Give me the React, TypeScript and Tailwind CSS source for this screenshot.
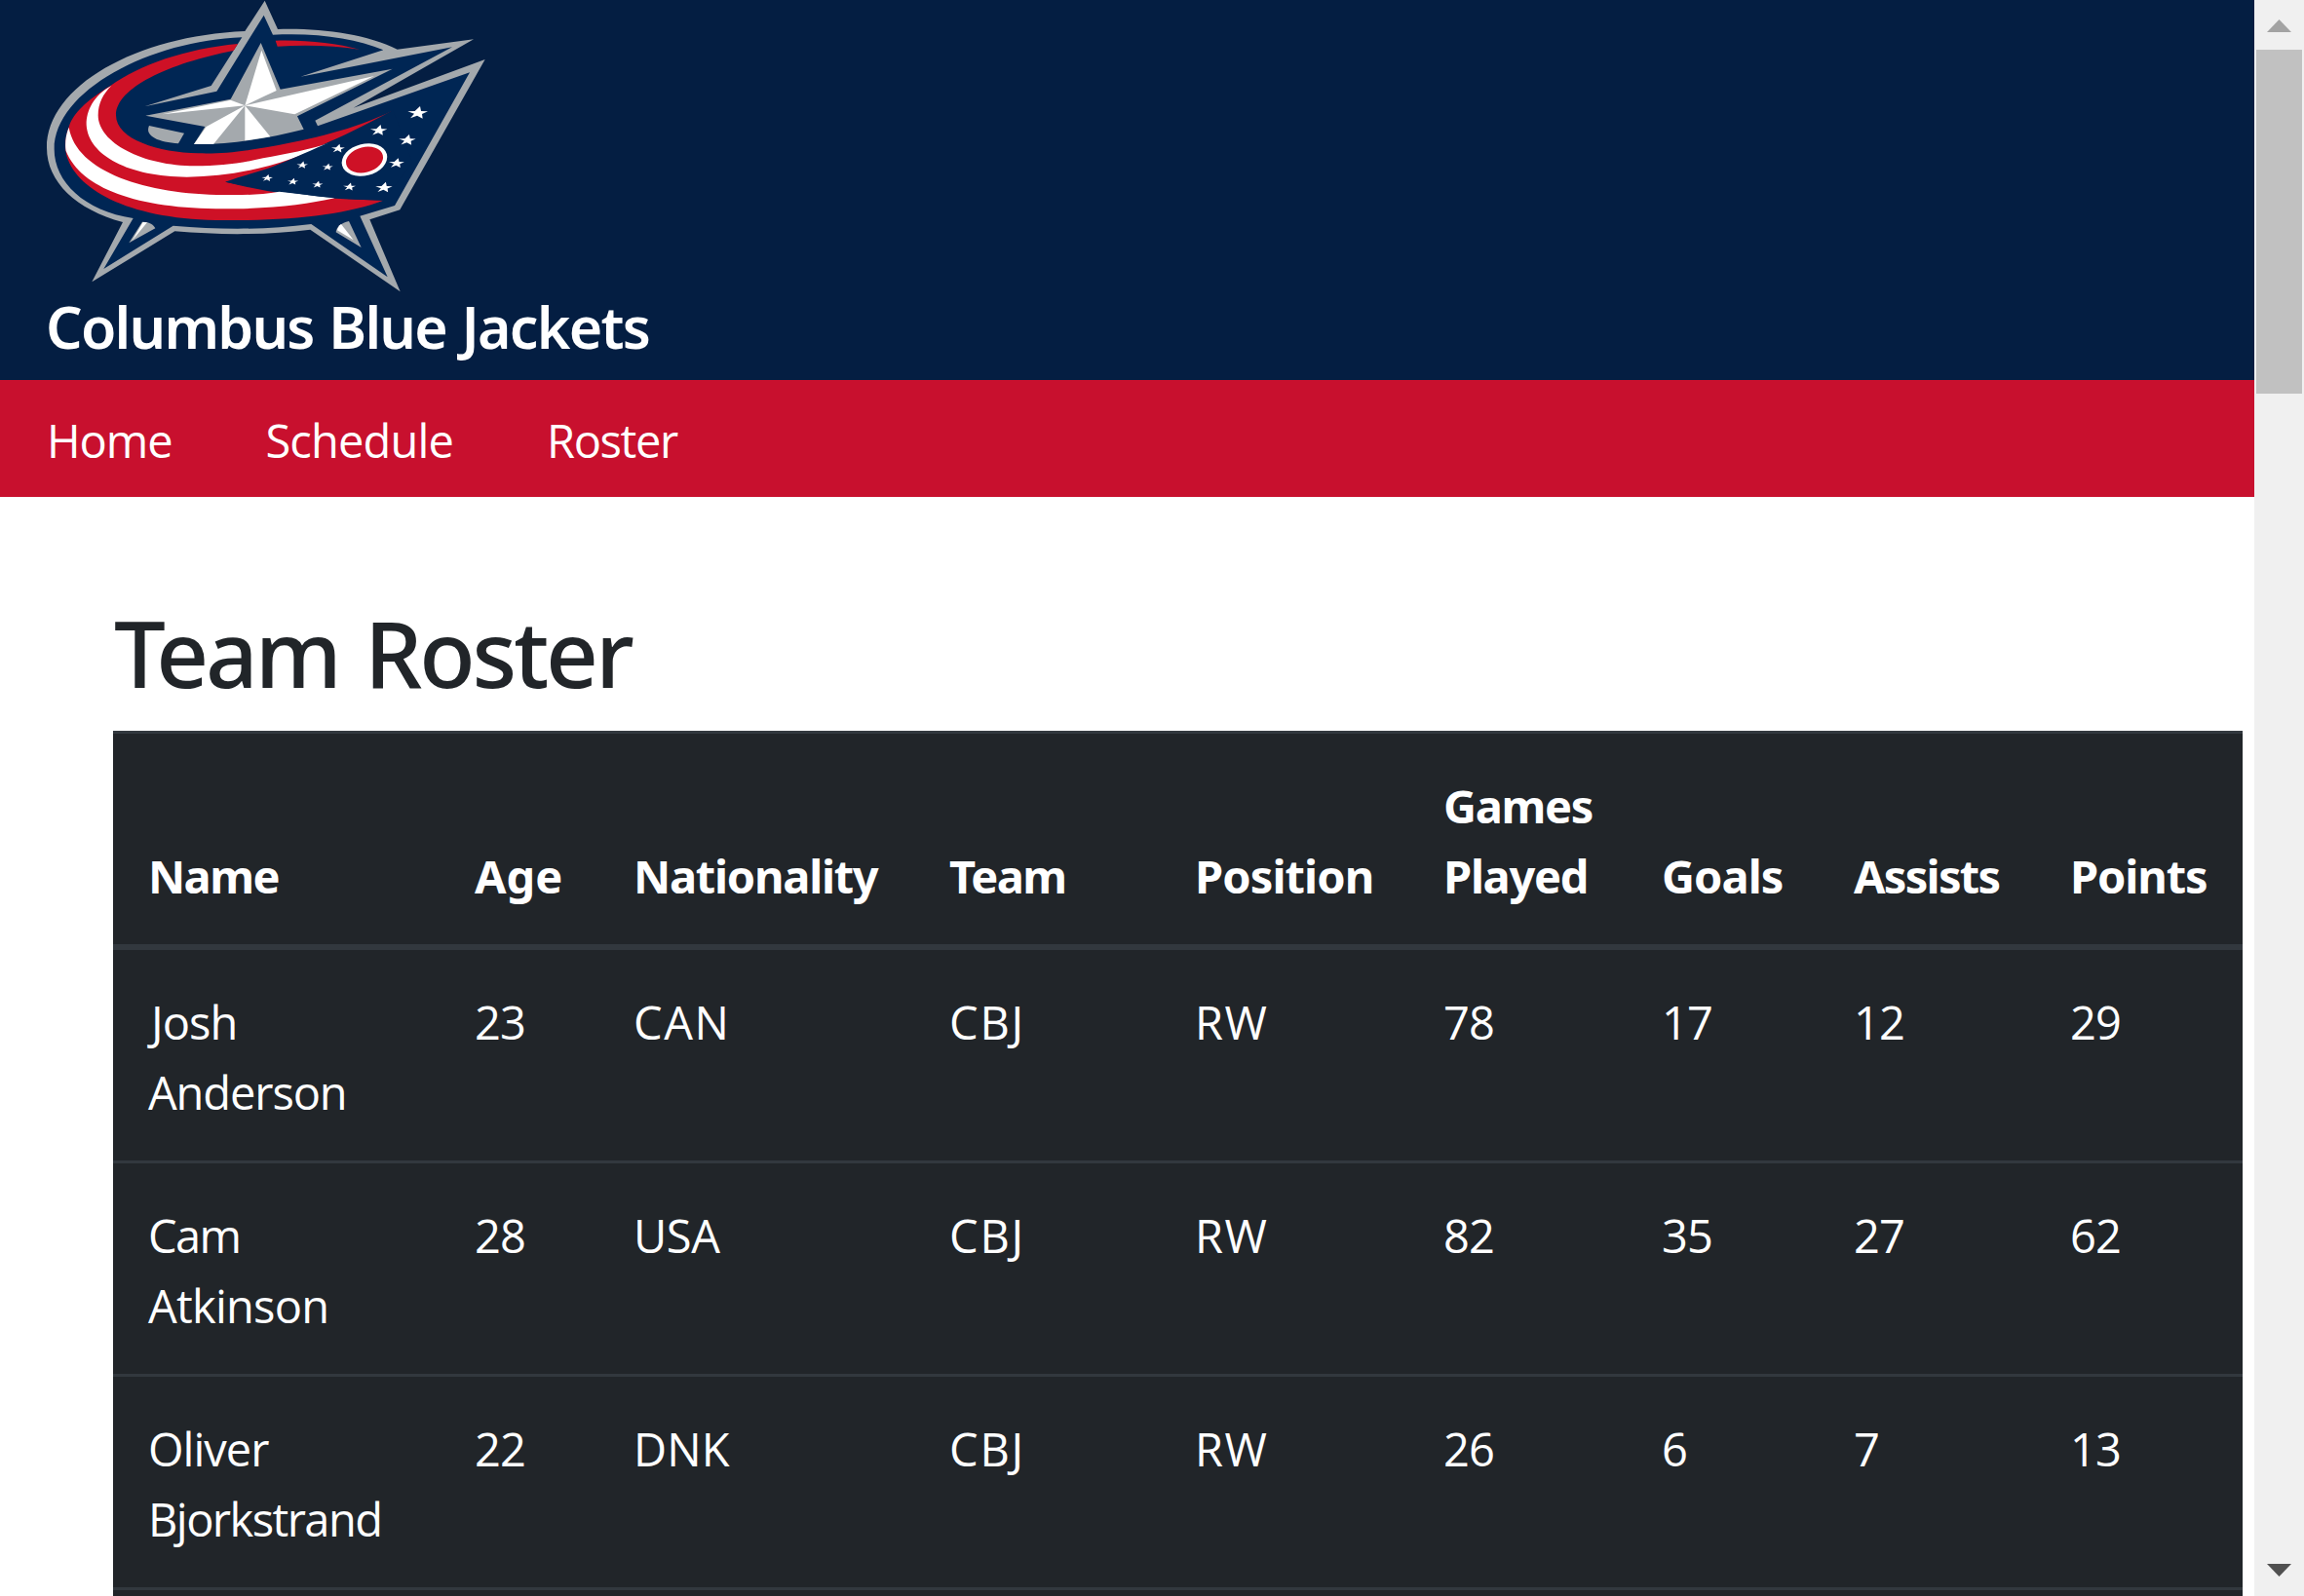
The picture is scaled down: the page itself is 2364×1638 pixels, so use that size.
const STARS: [number, number, number][] = [
  [1195, 347, 1], [1075, 401, 0.84], [1163, 431, 0.84], [1130, 502, 0.77], [1091, 577, 0.84], [950, 457, 0.68],
  [985, 575, 0.62], [840, 508, 0.56], [918, 514, 0.54], [811, 559, 0.54], [887, 568, 0.54], [732, 548, 0.56],
];

function Logo() {
  return (
    <svg className="ml-[30px] block h-[300px] w-[490px]" viewBox="0 0 1470 900" role="img" aria-label="Columbus Blue Jackets logo">
      {/* silver outline */}
      <path
        fill="#a4a9ad"
        d="M725 2 L765 90 C895 86 1035 104 1133 152 L1368 121 L998 332 L1403 183 L1141 646 L1048 676 L1142 898 L865 707 C730 724 590 724 448 712 L193 868 L288 684 C145 645 54 560 54 455 C54 265 330 110 664 96 Z"
      />
      {/* navy body */}
      <path
        fill="#002654"
        d="M722 47 L750 107 C885 100 1005 118 1090 154 L835 236 L1302 145 L880 371 L888 388 L1356 223 L1125 633 L1018 665 L1103 853 L868 690 C730 708 590 708 443 695 L229 828 L320 672 C170 650 77 560 77 460 C77 278 375 125 655 115 L560 264 L355 328 L577 281 Z"
      />
      {/* red swoosh */}
      <path
        fill="#ce1126"
        d="M642 135 C480 150 340 200 250 264 C175 310 135 350 123 388 C110 420 108 455 116 482 C150 590 320 678 600 678 C800 680 980 660 1090 617 C980 615 790 610 605 560 C740 535 830 480 920 438 C990 410 1060 370 1120 340 C1000 400 860 430 750 450 C650 468 590 474 520 472 C400 470 267 430 267 355 C267 270 430 195 629 156 Z"
      />
      <path fill="#ce1126" d="M758 125 C850 122 945 133 1016 152 C940 140 850 137 764 143 Z" />
      {/* white stripes */}
      <path
        fill="#fff"
        d="M253 264 C195 295 175 345 176 385 C182 480 310 545 485 545 C640 545 790 505 940 435 C860 462 790 474 720 487 C650 503 590 511 510 511 C350 511 212 440 212 355 C212 318 228 288 253 264 Z"
      />
      <path
        fill="#fff"
        d="M122 392 C110 420 110 450 113 465 C160 580 330 643 600 643 C750 643 850 630 940 610 L770 590 C710 600 660 601 600 600 C360 598 145 530 122 392 Z"
      />
      {/* flag canton */}
      <path
        fill="#002654"
        d="M603 560 C660 540 705 530 750 513 C820 485 870 462 930 436 C1000 410 1060 375 1120 340 L1180 500 L1090 617 C980 613 900 607 850 599 C770 589 690 577 603 560 Z"
      />
      {/* star */}
      <path fill="#a4a9ad" d="M713 132 L773 275 L1118 212 L825 358 L845 398 C740 425 610 447 507 444 L541 390 L358 356 L620 305 Z" />
      <g fill="#fff">
        <path d="M715 155 L761 279 L722 297 L664 325 Z" />
        <path d="M664 325 L720 312 L1062 234 L817 352 Z" />
        <path d="M664 325 L742 421 L664 433 Z" />
        <path d="M664 325 L567 444 L507 444 L545 390 Z" />
        <path d="M664 325 L620 308 L410 352 Z" />
      </g>
      <path fill="#a4a9ad" d="M369 387 L477 410 L459 442 C400 438 354 420 369 387 Z" />
      {/* lower star tips */}
      <path fill="#a4a9ad" d="M348 683 C368 682 384 692 388 703 L307 748 Z" />
      <path fill="#fff" d="M350 684 L363 685 L316 742 Z" />
      <path fill="#a4a9ad" d="M984 681 L1022 762 L944 715 C946 698 960 687 984 681 Z" />
      <path fill="#fff" d="M960 690 L998 739 L948 709 C949 702 953 695 960 690 Z" />
      {/* flag details */}
      <ellipse cx="1032" cy="492" rx="71" ry="49" fill="#fff" transform="rotate(-14 1032 492)" />
      <ellipse cx="1032" cy="492" rx="58" ry="39" fill="#ce1126" transform="rotate(-14 1032 492)" />
      <g fill="#fff">
        {STARS.map(([x, y, s]) => (
          <path
            key={`${x}-${y}`}
            transform={`translate(${x} ${y}) scale(${s})`}
            d="M8 -20 L11 -5 L32 -4 L14 4 L16 18 L-1 9 L-22 17 L-10 3 L-30 -4 L-8 -5 Z"
          />
        ))}
      </g>
    </svg>
  );
}

const NAV = [
  { label: "Home", track: "tracking-[-1.1px]" },
  { label: "Schedule", track: "tracking-[-0.85px]" },
  { label: "Roster", track: "tracking-[-1.35px]" },
];

const COLUMNS = [
  { words: ["Name"], width: "w-[335px]", track: "tracking-[-1.6px]" },
  { words: ["Age"], width: "w-[163px]", track: "" },
  { words: ["Nationality"], width: "w-[324px]", track: "tracking-[-1.25px]" },
  { words: ["Team"], width: "w-[252px]", track: "tracking-[-1.6px]" },
  { words: ["Position"], width: "w-[255px]", track: "tracking-[-0.9px]" },
  { words: ["Games", "Played"], width: "w-[224px]", track: "tracking-[-1.3px]" },
  { words: ["Goals"], width: "w-[197px]", track: "tracking-[-0.95px]" },
  { words: ["Assists"], width: "w-[222px]", track: "tracking-[-1.7px]" },
  { words: ["Points"], width: "w-[213px]", track: "tracking-[-1.1px]" },
];

const PLAYERS = [
  {
    first: "Josh", firstStyle: "tracking-[-0.9px] pl-[3px]", last: "Anderson", lastStyle: "tracking-[-1.1px]",
    age: 23,
    codes: [["CAN", "tracking-[1.6px]"], ["CBJ", "tracking-[1.8px]"], ["RW", "tracking-[1.5px]"]],
    stats: [78, 17, 12, 29],
  },
  {
    first: "Cam", firstStyle: "tracking-[-1.6px]", last: "Atkinson", lastStyle: "tracking-[-0.75px]",
    age: 28,
    codes: [["USA", "tracking-[-0.4px]"], ["CBJ", "tracking-[1.8px]"], ["RW", "tracking-[1.5px]"]],
    stats: [82, 35, 27, 62],
  },
  {
    first: "Oliver", firstStyle: "tracking-[-1px]", last: "Bjorkstrand", lastStyle: "tracking-[-1.55px]",
    age: 22,
    codes: [["DNK", "tracking-[0.1px]"], ["CBJ", "tracking-[1.8px]"], ["RW", "tracking-[1.5px]"]],
    stats: [26, 6, 7, 13],
  },
];

const CELL = "border-b-[3px] border-[#32383e] px-9 pt-[38px] pb-[34px] align-top";

function Roster() {
  return (
    <table className="w-[2185px] table-fixed border-separate border-spacing-0 text-left text-[47px] leading-[72px] text-white">
      <thead className="font-['Noto_Sans',sans-serif]">
        <tr>
          {COLUMNS.map((c) => (
            <th
              key={c.words[0]}
              className={`${c.width} ${c.track} border-t-[3px] border-b-[6px] border-[#32383e] px-9 pt-[38px] pb-[34px] align-bottom font-bold whitespace-nowrap`}
            >
              {c.words.map((w) => (
                <span key={w} className="block">{w}</span>
              ))}
            </th>
          ))}
        </tr>
      </thead>
      <tbody>
        {PLAYERS.map((p) => (
          <tr key={p.last}>
            <td className={CELL}>
              <span className={`block ${p.firstStyle}`}>{p.first}</span>
              <span className={`block ${p.lastStyle}`}>{p.last}</span>
            </td>
            <td className={`${CELL} tracking-[-0.9px]`}>{p.age}</td>
            {p.codes.map(([code, track]) => (
              <td key={code} className={`${CELL} ${track}`}>{code}</td>
            ))}
            {p.stats.map((n, i) => (
              <td key={i} className={`${CELL} tracking-[-0.9px]`}>{n}</td>
            ))}
          </tr>
        ))}
      </tbody>
    </table>
  );
}

function Scrollbar() {
  return (
    <aside className="flex w-[51px] shrink-0 flex-col items-center bg-[#f0f0f0]">
      <svg className="mt-5 mb-[18px] h-[13px] w-[25px] shrink-0" viewBox="0 0 25 13">
        <path d="M12.5 0 L25 13 H0 Z" fill="#a3a3a3" />
      </svg>
      <div className="h-[353px] w-[47px] bg-[#c1c1c1]" />
      <svg className="mt-auto mb-5 h-[13px] w-[25px] shrink-0" viewBox="0 0 25 13">
        <path d="M0 0 H25 L12.5 13 Z" fill="#505050" />
      </svg>
    </aside>
  );
}

export default function App() {
  return (
    <div className="flex h-[1638px] w-[2364px] overflow-hidden bg-white font-['Open_Sans',sans-serif]">
      <div className="flex w-[2313px] shrink-0 flex-col">
        <header className="h-[390px] shrink-0 bg-[#041e42]">
          <Logo />
          <h4 className="pl-[47px] font-['Noto_Sans',sans-serif] text-[59px] leading-[70px] font-semibold tracking-[-1.75px] [word-spacing:2px] text-white">
            Columbus Blue Jackets
          </h4>
        </header>
        <nav className="flex h-[120px] shrink-0 items-center gap-24 bg-[#c8102e] pt-1 pl-12 text-[47px] leading-[72px] text-white">
          {NAV.map((n) => (
            <a key={n.label} className={n.track}>{n.label}</a>
          ))}
        </nav>
        <main className="flex grow flex-col pt-[103px] pl-[116px]">
          <h2 className="mb-[22px] pl-px font-['Noto_Sans',sans-serif] text-[94px] leading-[115px] font-medium tracking-[-3.1px] [word-spacing:5px] text-[#212529]">
            Team Roster
          </h2>
          <div className="w-[2185px] grow bg-[#212529]">
            <Roster />
          </div>
        </main>
      </div>
      <Scrollbar />
    </div>
  );
}
